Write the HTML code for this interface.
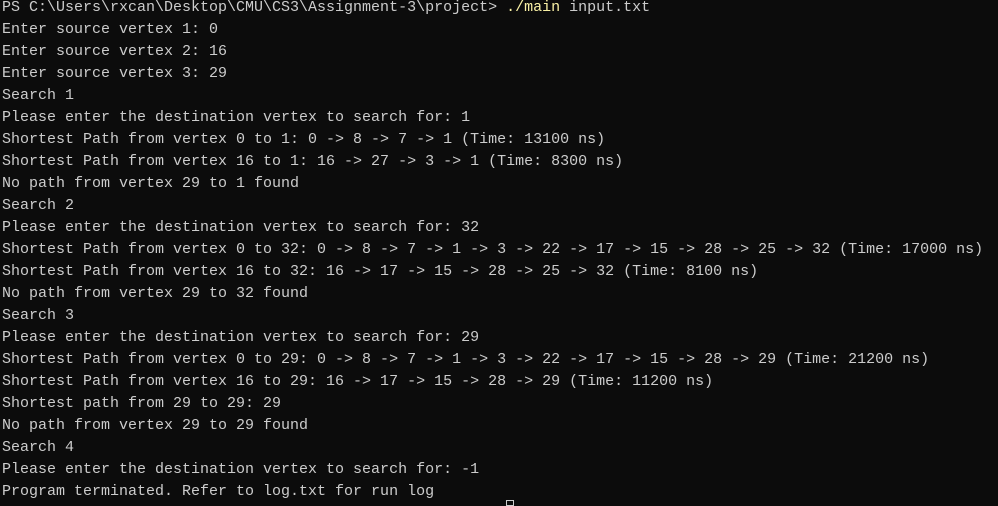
<!DOCTYPE html>
<html><head><meta charset="utf-8"><style>
html,body{margin:0;padding:0;background:#0c0c0c;width:998px;height:504px;overflow:hidden}
pre{margin:0;position:absolute;left:2px;top:-3px;font-family:"Liberation Mono",monospace;font-size:15px;line-height:22px;color:#cccccc;white-space:pre}
.y{color:#f9f1a5}
.cur{position:absolute;left:506px;top:500px;width:8px;height:6px;border:1px solid #cccccc;box-sizing:border-box}
</style></head><body>
<pre>PS C:\Users\rxcan\Desktop\CMU\CS3\Assignment-3\project> <span class="y">./main</span> input.txt
Enter source vertex 1: 0
Enter source vertex 2: 16
Enter source vertex 3: 29
Search 1
Please enter the destination vertex to search for: 1
Shortest Path from vertex 0 to 1: 0 -> 8 -> 7 -> 1 (Time: 13100 ns)
Shortest Path from vertex 16 to 1: 16 -> 27 -> 3 -> 1 (Time: 8300 ns)
No path from vertex 29 to 1 found
Search 2
Please enter the destination vertex to search for: 32
Shortest Path from vertex 0 to 32: 0 -> 8 -> 7 -> 1 -> 3 -> 22 -> 17 -> 15 -> 28 -> 25 -> 32 (Time: 17000 ns)
Shortest Path from vertex 16 to 32: 16 -> 17 -> 15 -> 28 -> 25 -> 32 (Time: 8100 ns)
No path from vertex 29 to 32 found
Search 3
Please enter the destination vertex to search for: 29
Shortest Path from vertex 0 to 29: 0 -> 8 -> 7 -> 1 -> 3 -> 22 -> 17 -> 15 -> 28 -> 29 (Time: 21200 ns)
Shortest Path from vertex 16 to 29: 16 -> 17 -> 15 -> 28 -> 29 (Time: 11200 ns)
Shortest path from 29 to 29: 29
No path from vertex 29 to 29 found
Search 4
Please enter the destination vertex to search for: -1
Program terminated. Refer to log.txt for run log</pre>
<div class="cur"></div>
</body></html>
